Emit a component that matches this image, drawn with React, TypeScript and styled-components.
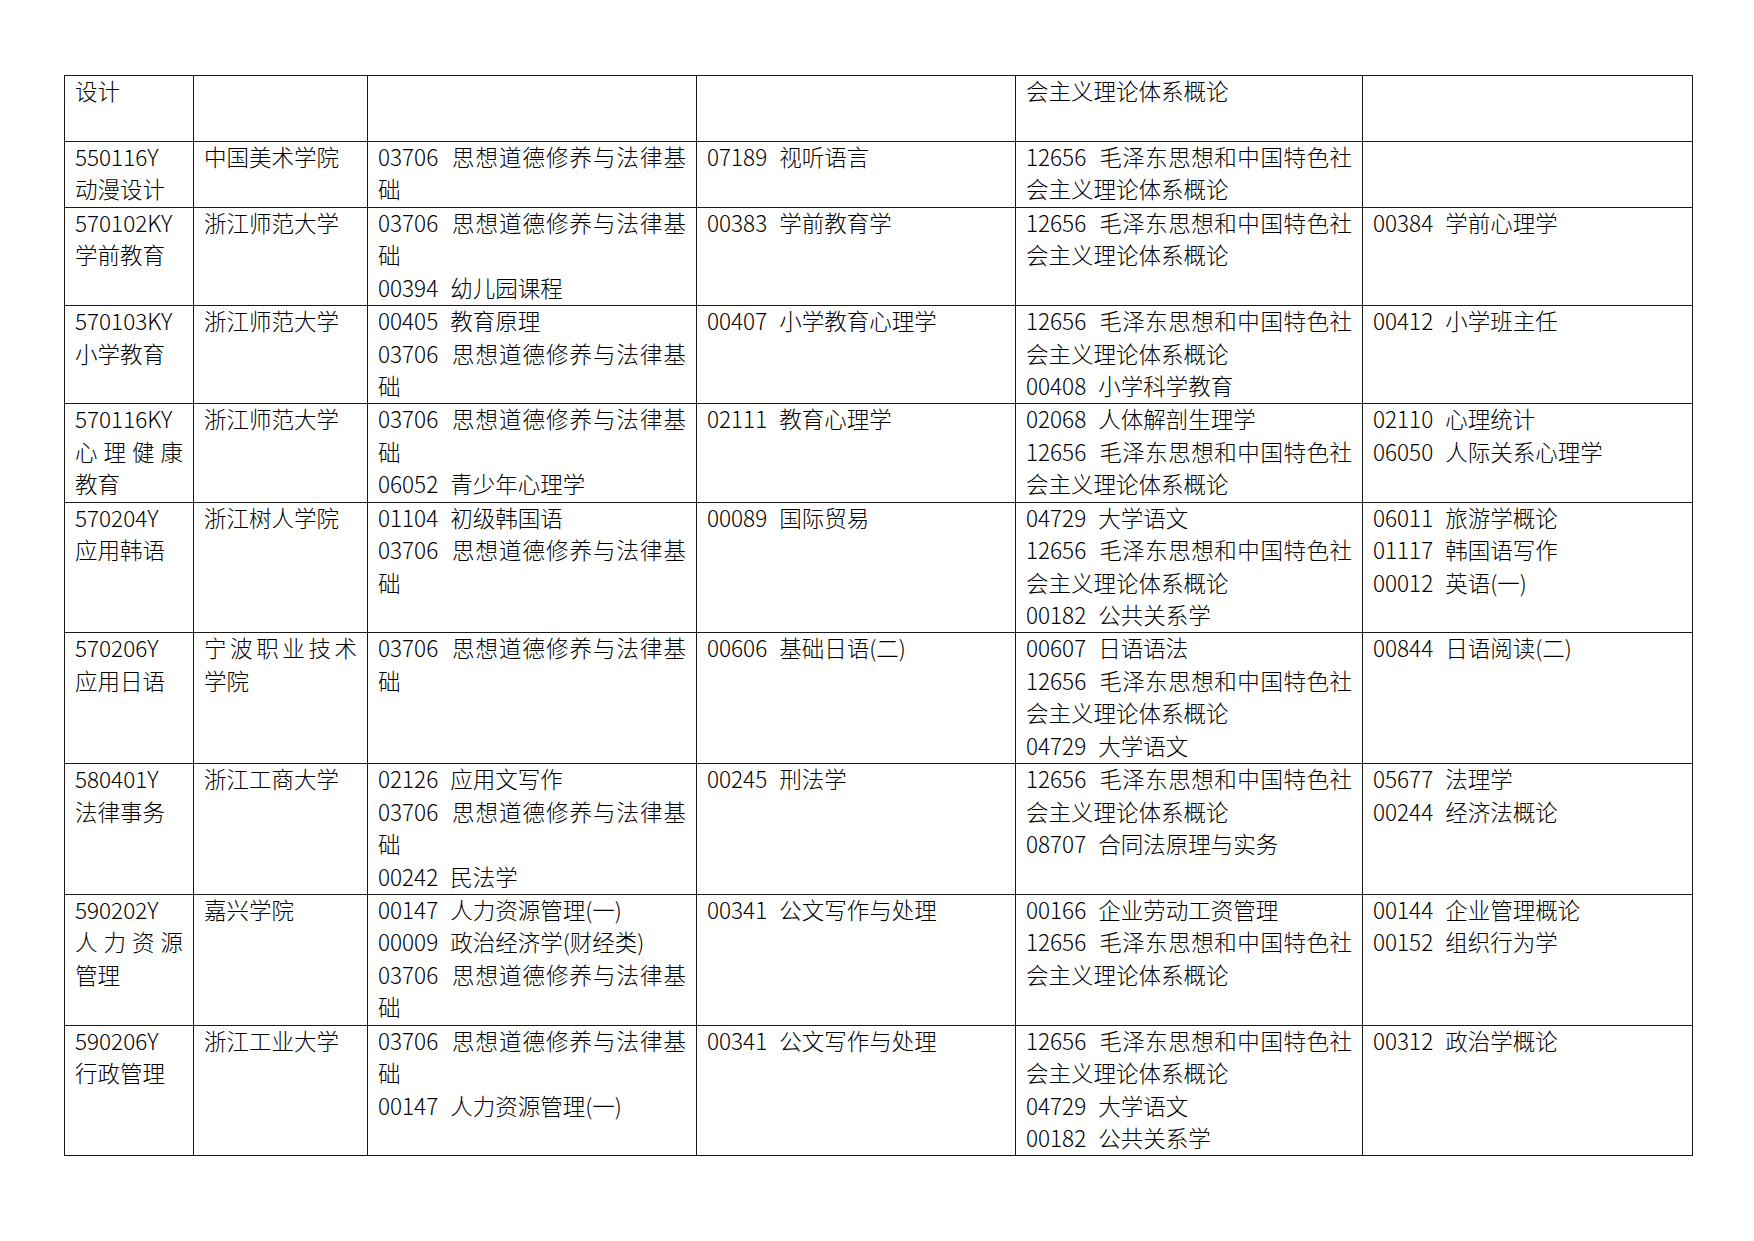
import React from 'react';
import styled, { createGlobalStyle } from 'styled-components';

const GlobalStyle = createGlobalStyle`
  html, body {
    margin: 0;
    padding: 0;
    background: #ffffff;
  }
  body {
    font-family: "Noto Sans CJK SC", "Noto Sans", sans-serif;
    color: #000000;
  }
`;

const Page = styled.div`
  padding: 75px 0 0 64px;
`;

const Table = styled.div`
  display: grid;
  grid-template-columns: 129px 174px 329px 319px 347px 330px;
  width: max-content;
  border-top: 1px solid #1a1a1a;
  border-left: 1px solid #1a1a1a;
`;

const Cell = styled.div`
  box-sizing: border-box;
  border-right: 1px solid #1a1a1a;
  border-bottom: 1px solid #1a1a1a;
  padding: 0 10px;
  font-size: 22.5px;
  font-weight: 300;
`;

// each paragraph line sits a touch above the middle of its 32.45px slot
const Line = styled.div<{ $spread?: boolean }>`
  box-sizing: border-box;
  height: 32.45px;
  line-height: 29.05px;
  padding-bottom: 3.4px;
  word-spacing: 1px;
  white-space: ${(p) => (p.$spread ? 'pre-wrap' : 'pre')};
  text-align: ${(p) => (p.$spread ? 'justify' : 'left')};
  text-align-last: ${(p) => (p.$spread ? 'justify' : 'auto')};
`;

type L = { t: string; spread?: boolean };

const s = (t: string): L => ({ t, spread: true });
const n = (t: string): L => ({ t });

const SIXIANG = [s('03706  思想道德修养与法律基'), n('础')];
const MAO = [s('12656  毛泽东思想和中国特色社'), n('会主义理论体系概论')];

const rows: L[][][] = [
  [[n('设计'), n('')], [], [], [], [n('会主义理论体系概论')], []],
  [
    [n('550116Y'), n('动漫设计')],
    [n('中国美术学院')],
    [...SIXIANG],
    [n('07189  视听语言')],
    [...MAO],
    [],
  ],
  [
    [n('570102KY'), n('学前教育')],
    [n('浙江师范大学')],
    [...SIXIANG, n('00394  幼儿园课程')],
    [n('00383  学前教育学')],
    [...MAO],
    [n('00384  学前心理学')],
  ],
  [
    [n('570103KY'), n('小学教育')],
    [n('浙江师范大学')],
    [n('00405  教育原理'), ...SIXIANG],
    [n('00407  小学教育心理学')],
    [...MAO, n('00408  小学科学教育')],
    [n('00412  小学班主任')],
  ],
  [
    [n('570116KY'), s('心理健康'), n('教育')],
    [n('浙江师范大学')],
    [...SIXIANG, n('06052  青少年心理学')],
    [n('02111  教育心理学')],
    [n('02068  人体解剖生理学'), ...MAO],
    [n('02110  心理统计'), n('06050  人际关系心理学')],
  ],
  [
    [n('570204Y'), n('应用韩语')],
    [n('浙江树人学院')],
    [n('01104  初级韩国语'), ...SIXIANG],
    [n('00089  国际贸易')],
    [n('04729  大学语文'), ...MAO, n('00182  公共关系学')],
    [n('06011  旅游学概论'), n('01117  韩国语写作'), n('00012  英语(一)')],
  ],
  [
    [n('570206Y'), n('应用日语')],
    [s('宁波职业技术'), n('学院')],
    [...SIXIANG],
    [n('00606  基础日语(二)')],
    [n('00607  日语语法'), ...MAO, n('04729  大学语文')],
    [n('00844  日语阅读(二)')],
  ],
  [
    [n('580401Y'), n('法律事务')],
    [n('浙江工商大学')],
    [n('02126  应用文写作'), ...SIXIANG, n('00242  民法学')],
    [n('00245  刑法学')],
    [...MAO, n('08707  合同法原理与实务')],
    [n('05677  法理学'), n('00244  经济法概论')],
  ],
  [
    [n('590202Y'), s('人力资源'), n('管理')],
    [n('嘉兴学院')],
    [n('00147  人力资源管理(一)'), n('00009  政治经济学(财经类)'), ...SIXIANG],
    [n('00341  公文写作与处理')],
    [n('00166  企业劳动工资管理'), ...MAO],
    [n('00144  企业管理概论'), n('00152  组织行为学')],
  ],
  [
    [n('590206Y'), n('行政管理')],
    [n('浙江工业大学')],
    [...SIXIANG, n('00147  人力资源管理(一)')],
    [n('00341  公文写作与处理')],
    [...MAO, n('04729  大学语文'), n('00182  公共关系学')],
    [n('00312  政治学概论')],
  ],
];

const App: React.FC = () => {
  return (
    <>
      <GlobalStyle />
      <Page>
        <Table>
          {rows.map((row, ri) =>
            row.map((cell, ci) => (
              <Cell key={`${ri}-${ci}`}>
                {cell.map((line, li) => (
                  <Line key={li} $spread={line.spread}>
                    {line.t === '' ? '\u00a0' : line.t}
                  </Line>
                ))}
              </Cell>
            ))
          )}
        </Table>
      </Page>
    </>
  );
};

export default App;
